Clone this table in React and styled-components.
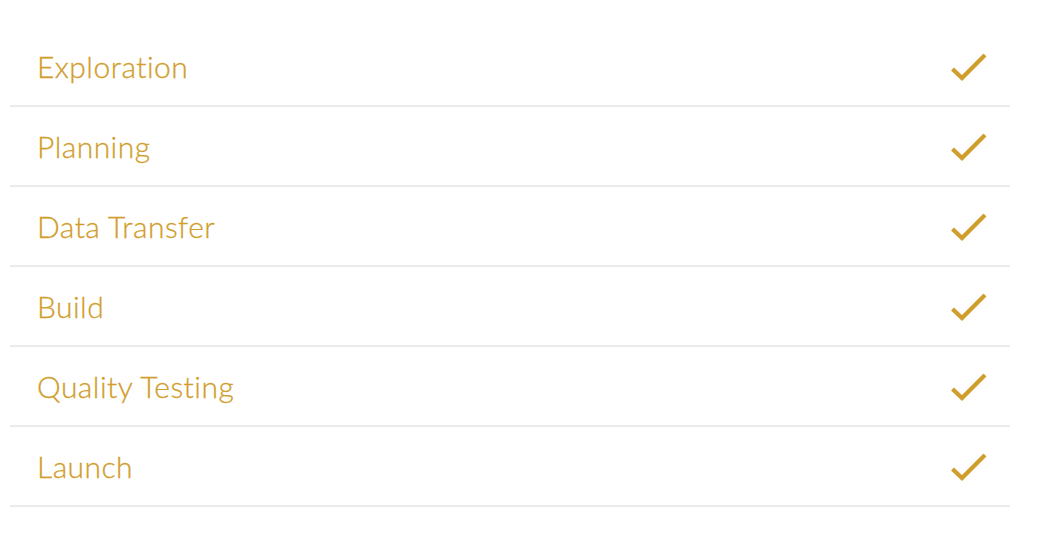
import React from 'react';
import styled, { createGlobalStyle } from 'styled-components';

const GlobalStyle = createGlobalStyle`
  body {
    margin: 0;
    background: #fff;
    font-family: Lato, "Open Sans", sans-serif;
  }
`;

const Container = styled.div`
  padding: 27px 0 0 10px;
  width: 1000px;
`;

const StepList = styled.ul`
  list-style: none;
  margin: 0;
  padding: 0;
`;

const StepItem = styled.li`
  display: flex;
  align-items: center;
  justify-content: space-between;
  height: 78px;
  padding: 0 23px 0 27px;
  border-bottom: 2px solid #ebebeb;
`;

const StepName = styled.span`
  color: #d19d2b;
  font-size: 30px;
  font-weight: 300;
  line-height: 1;
  letter-spacing: 0.45px;
  font-variant-ligatures: none;
  -webkit-text-stroke: 0.3px #d19d2b;
`;

const CheckIcon = styled.svg`
  display: block;
  margin-top: 2px;
`;

const Check = () => (
  <CheckIcon width="36" height="30" viewBox="0 0 36 30" fill="none">
    <path
      d="M1.5 17 L11 26 L34 3"
      stroke="#d19d2b"
      strokeWidth="4.2"
      strokeLinecap="butt"
      strokeLinejoin="miter"
    />
  </CheckIcon>
);

const steps = ['Exploration', 'Planning', 'Data Transfer', 'Build', 'Quality Testing', 'Launch'];

const App = () => (
  <>
    <GlobalStyle />
    <Container>
      <StepList>
        {steps.map(step => (
          <StepItem key={step}>
            <StepName>{step}</StepName>
            <Check />
          </StepItem>
        ))}
      </StepList>
    </Container>
  </>
);

export default App;
